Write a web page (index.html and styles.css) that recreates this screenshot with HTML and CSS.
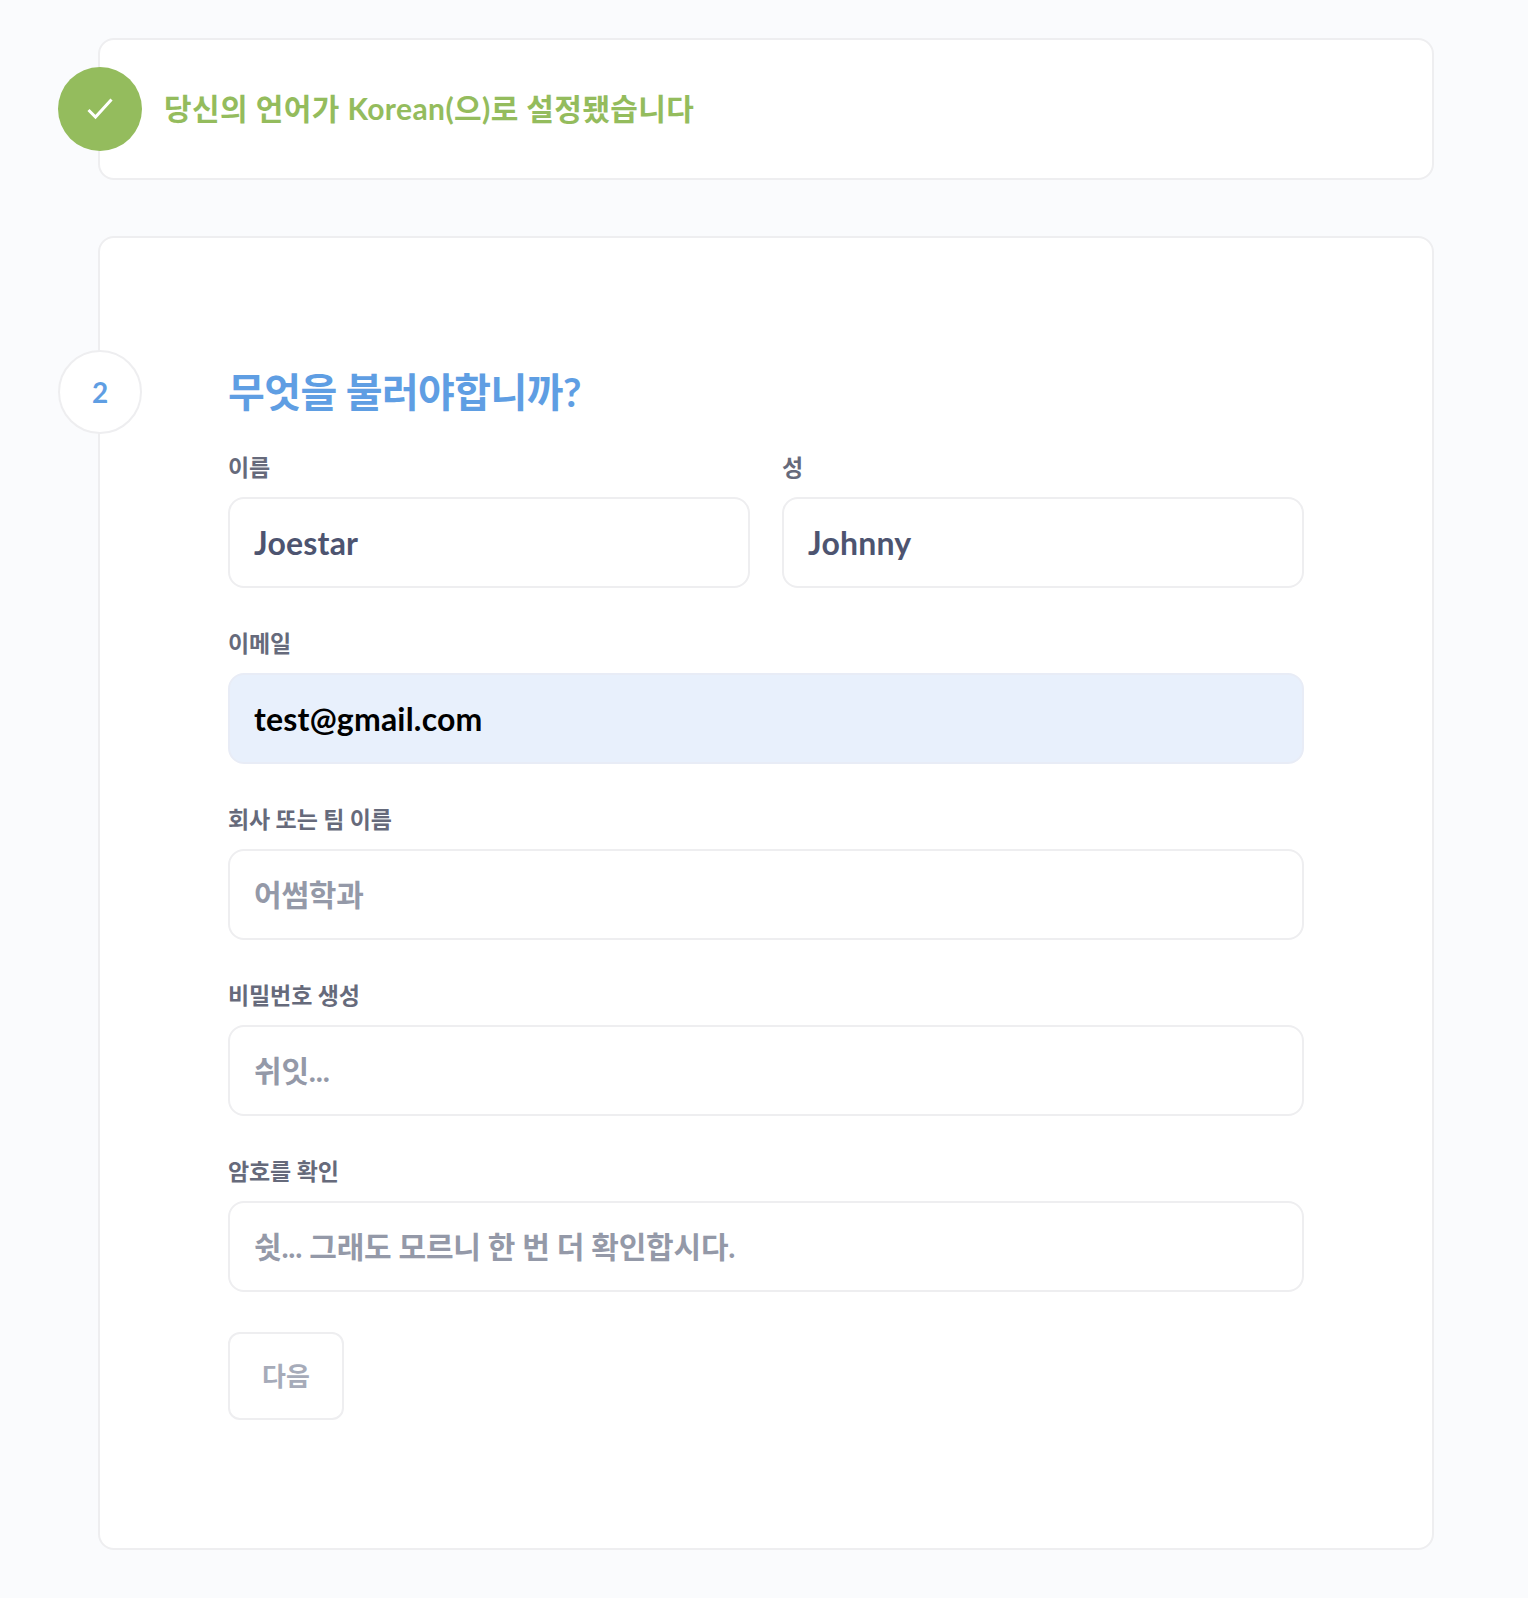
FILE: index.html
```html
<!DOCTYPE html>
<html lang="ko">
<head>
    <meta charset="UTF-8">
    <meta name="viewport" content="width=device-width, initial-scale=1.0">
    <title>회원가입</title>
    <link rel="stylesheet" href="styles.css">
</head>
<body>
    <!-- 완료된 단계 -->
    <section class="card card-done">
        <div class="step-badge step-badge-done">
            <svg width="26" height="22" viewBox="0 0 26 22" fill="none">
                <path d="M1.5 12 L8.5 19 L24.5 1.5" stroke="#fff" stroke-width="3"/>
            </svg>
        </div>
        <div class="done-text">당신의 언어가 Korean(으)로 설정됐습니다</div>
    </section>

    <!-- 현재 단계 -->
    <section class="card card-form">
        <div class="step-badge">2</div>
        <h1 class="form-title">무엇을 불러야합니까?</h1>
        <form class="form">
            <div class="field-row">
                <div class="field">
                    <label class="field-label">이름</label>
                    <div class="input">Joestar</div>
                </div>
                <div class="field">
                    <label class="field-label">성</label>
                    <div class="input">Johnny</div>
                </div>
            </div>
            <div class="field">
                <label class="field-label">이메일</label>
                <div class="input input-autofill">test@gmail.com</div>
            </div>
            <div class="field">
                <label class="field-label">회사 또는 팀 이름</label>
                <div class="input input-placeholder">어썸학과</div>
            </div>
            <div class="field">
                <label class="field-label">비밀번호 생성</label>
                <div class="input input-placeholder">쉬잇...</div>
            </div>
            <div class="field">
                <label class="field-label">암호를 확인</label>
                <div class="input input-placeholder">쉿... 그래도 모르니 한 번 더 확인합시다.</div>
            </div>
            <div class="next-btn">다음</div>
        </form>
    </section>
</body>
</html>
```

FILE: styles.css
```css
body {
    font-family: Lato, "Noto Sans CJK KR", sans-serif;
    margin: 0;
    padding: 38px 94px 48px 98px;
    background-color: #FAFBFD;
}
.card {
    position: relative;
    background-color: white;
    border: 2px solid #EEEEF0;
    border-radius: 16px;
    box-sizing: border-box;
}
.card-done {
    height: 142px;
    display: flex;
    align-items: center;
    padding-left: 64px;
    padding-bottom: 4px;
}
.card-form {
    margin-top: 56px;
    height: 1314px;
    padding: 125px 128px 0 128px;
}
.step-badge {
    position: absolute;
    left: -42px;
    top: 112px;
    width: 84px;
    height: 84px;
    box-sizing: border-box;
    border: 2px solid #EEEEF0;
    border-radius: 50%;
    background-color: white;
    color: #5F9EE3;
    font-size: 28px;
    font-weight: 700;
    display: flex;
    align-items: center;
    justify-content: center;
}
.step-badge-done {
    top: 27px;
    border: none;
    background-color: #94BC5D;
}
.done-text {
    color: #94BC5D;
    font-size: 30px;
    font-weight: 700;
    letter-spacing: 0.4px;
}
.form-title {
    margin: 0 0 30px 0;
    color: #5F9EE3;
    font-size: 40px;
    line-height: 58px;
    font-weight: 700;
    letter-spacing: -0.6px;
}
.form {
    display: flex;
    flex-direction: column;
    gap: 39px;
}
.field-row {
    display: flex;
    gap: 32px;
}
.field-row .field {
    flex: 1;
}
.field-label {
    display: block;
    color: #666A7B;
    font-size: 23px;
    font-weight: 700;
    line-height: 32px;
    margin-bottom: 14px;
    letter-spacing: -0.1px;
}
.input {
    height: 91px;
    box-sizing: border-box;
    border: 2px solid #EEEEF0;
    border-radius: 16px;
    padding: 0 24px;
    display: flex;
    align-items: center;
    color: #4D5470;
    font-size: 32px;
    font-weight: 700;
    letter-spacing: 0.2px;
}
.input-autofill {
    background-color: #E8F0FC;
    border-color: #E8ECF6;
    color: #000;
}
.input-placeholder {
    padding-bottom: 3px;
    color: #9499A8;
    font-size: 30px;
    letter-spacing: -0.2px;
}
.next-btn {
    width: 116px;
    height: 88px;
    margin-top: 1px;
    padding-bottom: 3px;
    box-sizing: border-box;
    border: 2px solid #EEEEF0;
    border-radius: 12px;
    display: flex;
    align-items: center;
    justify-content: center;
    color: #A6ABB9;
    font-size: 26px;
    font-weight: 700;
}
```
